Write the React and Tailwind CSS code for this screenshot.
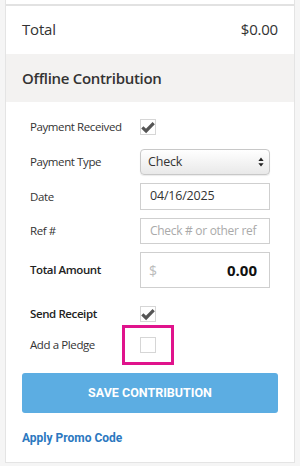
import React from 'react'

function Check({ checked }) {
  return (
    <span className="flex h-[16px] w-[16px] items-center justify-center border border-[#d6d6d6] bg-white">
      {checked && (
        <svg viewBox="0 0 16 16" className="h-[14px] w-[14px]">
          <path d="M1.5 8.5 L5.8 12.5 L14.5 3.5" fill="none" stroke="#555" strokeWidth="3.6" strokeLinejoin="miter" />
        </svg>
      )}
    </span>
  )
}

function Row({ label, className = '', labelClass = '', children }) {
  return (
    <div className={`flex items-center ${className}`}>
      <div className={`w-[110px] shrink-0 text-[11.5px] tracking-[-0.4px] ${labelClass}`}>{label}</div>
      {children}
    </div>
  )
}

export default function App() {
  return (
    <div className="min-h-[466px] bg-[#f5f5f5] px-[5px] pb-[6px] font-['Open_Sans',sans-serif] text-[#333]">
      <div className="border-x border-b border-[#e4e4e4] bg-white">
        <div className="h-[6px] border-b-2 border-[#e2e2e2]" />

        <div className="flex h-[48px] items-center justify-between px-[16px] pb-[1px] text-[15px] tracking-[-0.2px]">
          <span>Total</span>
          <span>$0.00</span>
        </div>

        <div className="flex h-[48px] items-center bg-[#f3f2f1] px-[16px] text-[15px] font-semibold tracking-[-0.3px]">
          Offline Contribution
        </div>

        <div className="px-[24px] pt-[16px]">
          <Row label="Payment Received" className="h-[18px]">
            <Check checked />
          </Row>

          <Row label="Payment Type" className="mt-[13px] h-[26px]">
            <div className="flex h-[26px] w-[130px] items-center justify-between rounded-[4px] border border-[#c8c8c8] bg-gradient-to-b from-white to-[#e9e9e9] pl-[7px] pr-[5px] text-[12.5px] tracking-[-0.2px] shadow-[0_1px_1px_rgba(0,0,0,0.08)]">
              <span>Check</span>
              <svg viewBox="0 0 8 12" className="h-[10px] w-[6px]">
                <path d="M4 0 L7.5 4.5 H0.5 Z M4 12 L7.5 7.5 H0.5 Z" fill="#222" />
              </svg>
            </div>
          </Row>

          <Row label="Date" className="mt-[8px] h-[27px]">
            <div className="flex h-[27px] w-[130px] items-center border border-[#cfcfcf] px-[9px] text-[12.5px] tracking-[-0.2px]">
              04/16/2025
            </div>
          </Row>

          <Row label="Ref #" className="mt-[8px] h-[26px]">
            <div className="flex h-[26px] w-[130px] items-center whitespace-nowrap border border-[#cfcfcf] px-[9px] text-[12px] tracking-[-0.3px] text-[#aaa]">
              Check # or other ref
            </div>
          </Row>

          <Row label="Total Amount" labelClass="font-semibold text-[#222]" className="mt-[8px] h-[36px]">
            <div className="flex h-[36px] w-[130px] items-center justify-between border border-[#cfcfcf] pl-[8px] pr-[12px]">
              <span className="text-[14px] text-[#bbb]">$</span>
              <span className="text-[15px] font-bold text-[#111]">0.00</span>
            </div>
          </Row>

          <Row label="Send Receipt" labelClass="font-semibold text-[#222]" className="mt-[17px] h-[18px]">
            <Check checked />
          </Row>

          <Row label="Add a Pledge" className="mt-[13px] h-[18px]">
            <div className="relative">
              <Check />
              <div className="absolute left-[-18px] top-[-12px] h-[40px] w-[52px] border-[3px] border-[#e0138c]" />
            </div>
          </Row>
        </div>

        <div className="px-[16px] pt-[19px]">
          <button className="flex h-[40px] w-full items-center justify-center rounded-[3px] bg-[#5cade2] font-['Roboto',sans-serif] text-[12.5px] font-bold text-white">
            SAVE CONTRIBUTION
          </button>
          <div className="pb-[15px] pt-[16px] font-['Roboto',sans-serif] text-[12px] font-bold text-[#2c78c0]">
            Apply Promo Code
          </div>
        </div>
      </div>
    </div>
  )
}
